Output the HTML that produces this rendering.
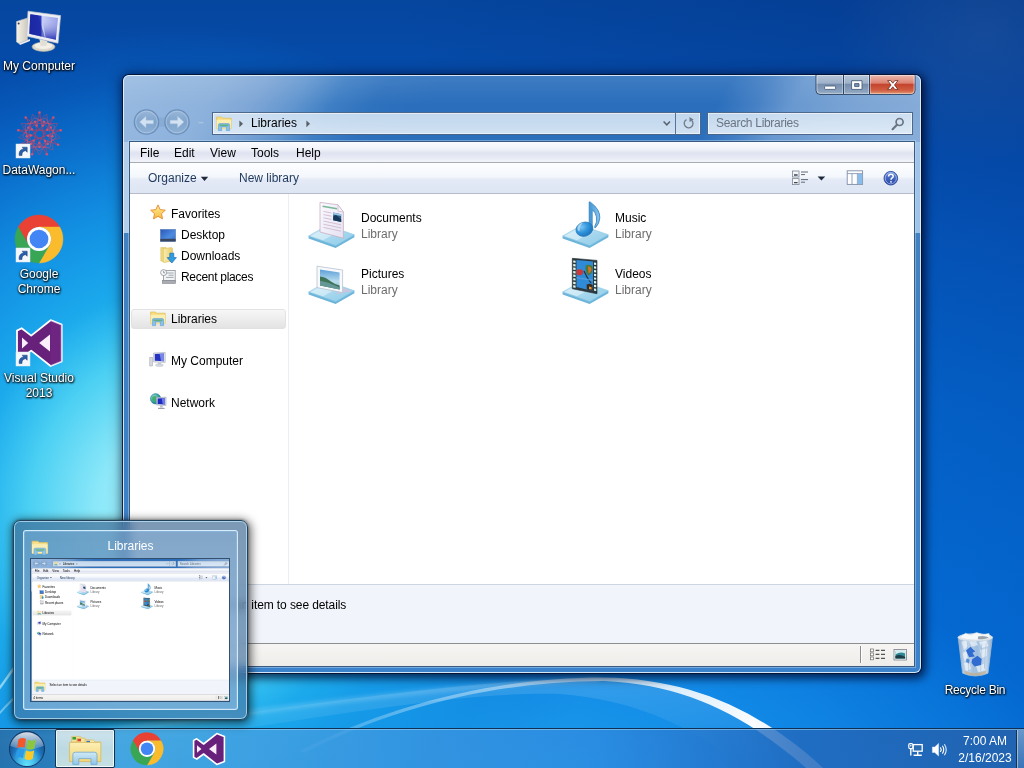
<!DOCTYPE html>
<html lang="en"><head><meta charset="utf-8"><title>Libraries</title>
<style>
*{box-sizing:border-box;margin:0;padding:0}
html,body{width:1024px;height:768px;overflow:hidden}
body{position:relative;font-family:"Liberation Sans",sans-serif;font-size:12px;color:#000;
 background:#0b5fc4;}
#wall{position:absolute;left:0;top:0;width:1024px;height:768px;overflow:hidden;
 background:
  radial-gradient(ellipse 440px 490px at 175px 515px, rgb(168,241,252) 0%, rgb(140,232,249) 18%, rgb(76,208,243) 33%, rgb(48,188,240) 40%, rgb(28,170,236) 46%, rgb(22,156,232) 55%, rgba(20,150,230,.82) 65%, rgba(16,138,224,.52) 78%, rgba(14,128,220,.2) 90%, rgba(14,128,220,0) 100%),
  radial-gradient(ellipse 620px 300px at 470px 820px, rgba(34,168,238,1) 0%, rgba(24,148,233,.78) 50%, rgba(12,115,216,0) 100%),
  linear-gradient(68deg, rgba(4,30,100,0) 0%, rgba(4,30,100,0) 52%, rgba(2,20,90,.2) 100%),
  radial-gradient(ellipse 150px 130px at 985px 35px, rgba(70,118,175,.30) 0%, rgba(70,118,175,.16) 50%, rgba(70,118,175,0) 100%),
  linear-gradient(180deg,#05469f 0%,#054dad 12%,#055cc4 32%,#0468d2 52%,#0470dc 75%,#0474e2 100%);}
.abs{position:absolute}
.dlabel{position:absolute;color:#fff;text-align:center;white-space:nowrap;font-size:12px;line-height:15px;
 text-shadow:0 1px 2px rgba(0,0,0,.95),1px 1px 2px rgba(0,0,0,.8),0 0 3px rgba(0,0,0,.6)}
svg{display:block;position:absolute;overflow:visible}
.client,.addr,.search,.tray,.dlabel,#ptitle,#thumb{will-change:transform}
#thumb .client,#thumb .addr,#thumb .search{will-change:auto}
/* window */
.win{position:absolute;width:798px;height:598px;border-radius:6px;
 box-shadow:0 0 0 1px rgba(4,16,48,.85), 2px 3px 8px 2px rgba(0,8,40,.68), 0 0 14px 3px rgba(0,10,40,.28);
 overflow:hidden;
 background:#3f7fc2}
.glass{position:absolute;left:0;top:0;width:798px;height:67px;
 background:
  linear-gradient(180deg, rgba(255,255,255,.10) 0px, rgba(255,255,255,0) 30px),
  linear-gradient(120deg, rgb(152,186,225) 0%, rgb(141,178,220) 12%, rgb(126,166,214) 17.5%, rgb(98,150,207) 22.5%, rgb(62,126,196) 27%, rgb(46,113,189) 32%, rgb(42,110,188) 38%, rgb(42,110,188) 73%, rgb(68,127,196) 77.5%, rgb(104,152,208) 82%, rgb(124,165,213) 90%, rgb(136,173,217) 100%);}
.glasslow{position:absolute;left:0;top:67px;width:798px;height:531px;
 background:
  linear-gradient(90deg, rgb(178,206,234) 0px, rgb(178,206,234) 7px, rgba(0,0,0,0) 7px, rgba(0,0,0,0) 791px, rgb(160,196,232) 791px, rgb(160,196,232) 798px) 0 0/798px 91px no-repeat,
  linear-gradient(180deg,#4683c0 0%,#3d80c4 50%,#3a82cc 100%)}
.winedge{position:absolute;left:0;top:0;width:798px;height:598px;border-radius:6px;
 box-shadow:inset 0 0 0 1px rgba(232,244,253,.88)}
.client{position:absolute;left:6px;top:66px;width:786px;height:526px;border:1px solid #3b5a82;background:#fff;box-shadow:0 0 0 1px rgba(190,225,248,.45)}
.menubar{position:absolute;left:0;top:0;width:784px;height:21px;border-bottom:1px solid #a7abb3;
 background:linear-gradient(180deg,#fbfcfe 0%,#f1f3fa 35%,#dfe2f0 55%,#e6e9f4 75%,#f3f4fa 100%)}
.menubar span{position:absolute;top:4px;font-size:12px;line-height:15px;color:#000}
.cmdbar{position:absolute;left:0;top:21px;width:784px;height:31px;border-bottom:1px solid #b6bccc;
 background:linear-gradient(180deg,#fdfeff 0%,#f4f7fc 45%,#e4eaf6 55%,#dde5f3 100%)}
.cmdbar span{position:absolute;top:8px;font-size:12px;line-height:15px;color:#1e395b}
.nav{position:absolute;left:0;top:52px;width:159px;height:390px;background:#fff;border-right:1px solid #ebeef2}
.nav span{position:absolute;font-size:12px;line-height:15px;color:#000;white-space:nowrap}
.sel{position:absolute;left:1px;top:115px;width:155px;height:20px;border:1px solid #e2e2e2;border-radius:3px;
 background:linear-gradient(180deg,#f7f7f7 0%,#ededed 50%,#e3e3e3 100%)}
.content{position:absolute;left:159px;top:52px;width:625px;height:390px;background:#fff}
.content .t{position:absolute;font-size:12px;line-height:15px;color:#000;white-space:nowrap}
.content .g{position:absolute;font-size:12px;line-height:15px;color:#6d6d6d;white-space:nowrap}
.details{position:absolute;left:0;top:442px;width:784px;height:59px;background:#f1f5fb;border-top:1px solid #ccd5e2}
.details span{position:absolute;left:69px;top:13px;letter-spacing:-.1px;font-size:12px;line-height:15px;white-space:nowrap;color:#000}
.status{position:absolute;left:0;top:501px;width:784px;height:23px;background:linear-gradient(180deg,#f6f5f3,#efedea);border-top:1px solid #8e8f8f}
.status span{position:absolute;left:4px;top:4px;font-size:12px;line-height:15px;color:#000}
.addr{position:absolute;left:89px;top:37px;width:489px;height:23px;border:1px solid rgba(44,72,112,.8);
 background:linear-gradient(180deg,rgba(214,229,244,.88),rgba(226,237,247,.9));box-shadow:inset 0 0 0 1px rgba(255,255,255,.55)}
.addr span{position:absolute;left:38px;top:3px;font-size:12px;line-height:15px;color:#000}
.search{position:absolute;left:584px;top:37px;width:206px;height:23px;border:1px solid rgba(44,72,112,.8);
 background:linear-gradient(180deg,rgba(214,229,244,.88),rgba(228,238,248,.92));box-shadow:inset 0 0 0 1px rgba(255,255,255,.55)}
.search span{position:absolute;left:8px;top:3px;font-size:12px;line-height:15px;color:#6b7480;letter-spacing:-.3px}
/* taskbar */
#taskbar{position:absolute;left:0;top:728px;width:1024px;height:40px;border-top:1px solid #0f2f55;
 background:linear-gradient(90deg, rgba(40,112,170,.92) 0px, rgba(44,122,182,.9) 50px, rgba(76,166,222,.84) 120px, rgba(70,160,224,.78) 260px, rgba(48,136,222,.7) 600px, rgba(34,104,188,.82) 800px, rgba(36,98,172,.9) 1024px);
 box-shadow:inset 0 1px 0 rgba(160,215,245,.55)}
.tray{position:absolute;color:#fff;font-size:12px;line-height:15px;white-space:nowrap;text-align:center}
/* popup */
#pop{position:absolute;left:13px;top:520px;width:235px;height:200px;border-radius:7px;border:1px solid #23425f;-webkit-backdrop-filter:blur(5px);backdrop-filter:blur(5px);
 background:linear-gradient(180deg,rgba(62,104,146,.68),rgba(70,118,164,.66));
 box-shadow:inset 0 0 0 1px rgba(190,228,246,.75), 1px 2px 10px 2px rgba(0,0,0,.6), 0 0 3px rgba(0,0,0,.5)}
#hov{position:absolute;left:9px;top:9px;width:215px;height:180px;border-radius:3px;border:1px solid rgba(215,238,252,.95);
 background:linear-gradient(180deg,rgba(140,185,228,.42),rgba(165,205,240,.48));box-shadow:inset 0 0 0 1px rgba(150,195,230,.45)}
#ptitle{position:absolute;left:0px;top:18px;width:233px;text-align:center;color:#fff;font-size:12px;line-height:15px}
#thumb{position:absolute;left:16px;top:37px;width:200px;height:144px;overflow:hidden;border:1px solid #34506e;background:#fff}
#thumb .win{left:0;top:0;transform-origin:0 0;transform:translate(-.6px,-7.4px) scale(.252);box-shadow:none;filter:blur(1px)}
</style></head>
<body>
<div id="wall"><svg style="left:0;top:0" width="1024" height="768" viewBox="0 0 1024 768"><defs>
<linearGradient id="swa" gradientUnits="userSpaceOnUse" x1="300" y1="0" x2="840" y2="0"><stop offset="0" stop-color="#fff" stop-opacity=".12"/><stop offset=".2" stop-color="#fff" stop-opacity=".32"/><stop offset=".5" stop-color="#fff" stop-opacity=".5"/><stop offset=".68" stop-color="#fff" stop-opacity=".82"/><stop offset=".84" stop-color="#fff" stop-opacity=".98"/><stop offset="1" stop-color="#fff" stop-opacity=".75"/></linearGradient>
<linearGradient id="swb" gradientUnits="userSpaceOnUse" x1="0" y1="680" x2="0" y2="760"><stop offset="0" stop-color="#fff" stop-opacity=".14"/><stop offset="1" stop-color="#fff" stop-opacity="0"/></linearGradient>
<filter id="swf" x="-5%" y="-5%" width="110%" height="110%"><feGaussianBlur stdDeviation=".7"/></filter>
<filter id="swg" x="-5%" y="-20%" width="110%" height="140%"><feGaussianBlur stdDeviation="2.2"/></filter></defs>
<path d="M-20 742 C150 736 420 677 604 678.5 C690 680 758 712 826 780 L760 780 C700 730 640 700 560 694 C420 690 200 745 -20 760 Z" fill="url(#swb)"/>
<path d="M-20 742 C120 735 350 690 600 678.5" stroke="#fff" stroke-opacity=".22" stroke-width="4" fill="none" filter="url(#swg)"/>
<path d="M300 751 C390 704 500 677.2 604 677.4 C694 679 766 711 838 782 L822 782 C752 718 690 684.5 604 681 C500 680.6 392 707 304 753 Z" fill="url(#swa)" filter="url(#swf)"/>
<path d="M-10 700 C2 686 8 676 14 668" stroke="#e9ffff" stroke-opacity=".55" stroke-width="2.5" fill="none" filter="url(#swf)"/>
<path d="M-10 724 C0 712 8 704 14 698" stroke="#e9ffff" stroke-opacity=".4" stroke-width="2" fill="none" filter="url(#swf)"/>
</svg></div>
<svg style="left:15px;top:8px" width="48" height="48" viewBox="15 8 48 48"><defs>
<linearGradient id="dc1" x1="0" y1="0" x2="1" y2="0"><stop offset="0" stop-color="#1d2aa8"/><stop offset=".42" stop-color="#2a3ac0"/><stop offset=".43" stop-color="#c9d0f6"/><stop offset="1" stop-color="#8d98ea"/></linearGradient>
<linearGradient id="dc2" x1="0" y1="0" x2="0" y2="1"><stop offset="0" stop-color="#fff" stop-opacity="0"/><stop offset="1" stop-color="#1c27b0" stop-opacity=".9"/></linearGradient>
<linearGradient id="dc3" x1="0" y1="0" x2="1" y2="0"><stop offset="0" stop-color="#f6f3ea"/><stop offset="1" stop-color="#cfcabc"/></linearGradient></defs>
<path d="M16.5 21.5 L27.5 18 L27.5 40 L19 43.5 L16.5 42 Z" fill="url(#dc3)" stroke="#b9bcc8" stroke-width=".6"/>
<circle cx="18.6" cy="23.6" r="1" fill="#3a3f55"/>
<path d="M19 43.5 L30 39 L30 41 L20 45 Z" fill="#e9ebf0"/>
<ellipse cx="43.5" cy="46.8" rx="11.5" ry="4.6" fill="#dcd8cc" stroke="#b8b4a6" stroke-width=".6"/>
<ellipse cx="43.5" cy="45.8" rx="9" ry="3.2" fill="#f3f0e8"/>
<path d="M39.5 39 L47.5 41 L46.5 46 L40.5 46 Z" fill="#e2dfd4"/>
<path d="M28 11.2 L60.6 15.6 L58 43.2 L26.8 36.2 Z" fill="#eceef3" stroke="#c3c6d2" stroke-width=".7"/>
<path d="M30.3 14.2 L58 17.9 L55.8 39.8 L29.3 33.8 Z" fill="url(#dc1)"/>
<path d="M42 15.8 L58 17.9 L55.8 39.8 L45.5 37.5 Z" fill="url(#dc2)"/>
<path d="M30.3 14.2 L38 15.2 L45 37.4 L29.3 33.8 Z" fill="#1a249c" opacity=".55"/>
</svg><div class="dlabel" style="left:0;top:59px;width:78px">My Computer</div>
<svg style="left:15px;top:110px" width="48" height="48" viewBox="15 110 48 48">
<path d="M39.5 112.0 L47.0 154.7 M53.7 117.2 L32.0 154.7 M61.2 130.2 L20.4 145.0 M58.5 145.0 L17.8 130.2 M47.0 154.7 L25.4 117.1 M32.0 154.7 L39.5 112.0 M20.4 145.0 L53.7 117.2 M17.8 130.2 L61.2 130.2 M25.4 117.1 L58.5 145.0" fill="none" stroke="#d8364e" stroke-width="1" opacity=".6"/>
<path d="M46.7 114.3 L53.0 150.1 M57.7 123.5 L39.5 155.0 M60.2 137.7 L26.0 150.1 M53.0 150.1 L18.8 137.6 M39.5 155.0 L21.3 123.5 M26.0 150.1 L32.4 114.3 M18.8 137.6 L46.7 114.3 M21.3 123.5 L57.7 123.5 M32.4 114.3 L60.2 137.7" fill="none" stroke="#e0405e" stroke-width=".9" opacity=".5"/>
<path d="M45.7 118.2 L56.2 137.3 M54.4 125.8 L50.1 147.3 M56.2 137.3 L39.1 151.0 M50.1 147.3 L28.3 146.8 M39.1 151.0 L22.7 136.6 M28.3 146.8 L25.0 125.2 M22.7 136.6 L34.0 117.9 M25.0 125.2 L45.7 118.2 M34.0 117.9 L54.4 125.8" fill="none" stroke="#e85a70" stroke-width=".9" opacity=".45"/>
<circle cx="39.5" cy="112.5" r="1.3" fill="#f0506a" opacity=".8"/><circle cx="53.3" cy="117.5" r="1.3" fill="#f0506a" opacity=".8"/><circle cx="60.7" cy="130.3" r="1.3" fill="#f0506a" opacity=".8"/><circle cx="58.1" cy="144.8" r="1.3" fill="#f0506a" opacity=".8"/><circle cx="46.8" cy="154.2" r="1.3" fill="#f0506a" opacity=".8"/><circle cx="32.1" cy="154.2" r="1.3" fill="#f0506a" opacity=".8"/><circle cx="20.9" cy="144.7" r="1.3" fill="#f0506a" opacity=".8"/><circle cx="18.3" cy="130.2" r="1.3" fill="#f0506a" opacity=".8"/><circle cx="25.7" cy="117.5" r="1.3" fill="#f0506a" opacity=".8"/><circle cx="44.0" cy="121.8" r="1.3" fill="#f0506a" opacity=".8"/><circle cx="50.8" cy="127.5" r="1.3" fill="#f0506a" opacity=".8"/><circle cx="52.3" cy="136.3" r="1.3" fill="#f0506a" opacity=".8"/><circle cx="47.8" cy="144.0" r="1.3" fill="#f0506a" opacity=".8"/><circle cx="39.5" cy="147.0" r="1.3" fill="#f0506a" opacity=".8"/><circle cx="31.1" cy="143.9" r="1.3" fill="#f0506a" opacity=".8"/><circle cx="26.7" cy="136.2" r="1.3" fill="#f0506a" opacity=".8"/><circle cx="28.3" cy="127.5" r="1.3" fill="#f0506a" opacity=".8"/><circle cx="35.1" cy="121.8" r="1.3" fill="#f0506a" opacity=".8"/><circle cx="42.8" cy="125.6" r="1.3" fill="#f0506a" opacity=".8"/><circle cx="47.4" cy="129.7" r="1.3" fill="#f0506a" opacity=".8"/><circle cx="48.3" cy="135.8" r="1.3" fill="#f0506a" opacity=".8"/><circle cx="45.1" cy="141.0" r="1.3" fill="#f0506a" opacity=".8"/><circle cx="39.3" cy="143.0" r="1.3" fill="#f0506a" opacity=".8"/><circle cx="33.6" cy="140.8" r="1.3" fill="#f0506a" opacity=".8"/><circle cx="30.6" cy="135.4" r="1.3" fill="#f0506a" opacity=".8"/><circle cx="31.8" cy="129.3" r="1.3" fill="#f0506a" opacity=".8"/><circle cx="36.6" cy="125.5" r="1.3" fill="#f0506a" opacity=".8"/>
<g transform="translate(16 144)"><g><rect x="0" y="0" width="14" height="14" fill="#f4f8fc" stroke="#dfe7ef" stroke-width=".5"/><path d="M3.2 11.6 C2.6 7.6 4.6 5.3 7.6 5.1 L6.2 3.2 L11.2 3.2 L11.2 8.2 L9.5 6.7 C7.2 6.9 5.6 8.6 6.0 11.6 Z" fill="#2b5fa8" stroke="#1d3f7a" stroke-width=".5"/></g>
</g></svg><div class="dlabel" style="left:0;top:163px;width:78px">DataWagon...</div>
<svg style="left:15px;top:214px" width="48" height="50" viewBox="15 214 48 50"><path d="M18.22 227.00 A24 24 0 0 1 59.78 227.00 L39.00 227.00 A12.00 12.00 0 0 0 28.61 245.00 Z" fill="#e94235" stroke="#e94235" stroke-width=".4"/><path d="M59.78 227.00 A24 24 0 0 1 39.00 263.00 L49.39 245.00 A12.00 12.00 0 0 0 39.00 227.00 Z" fill="#fabb2d" stroke="#fabb2d" stroke-width=".4"/><path d="M39.00 263.00 A24 24 0 0 1 18.22 227.00 L28.61 245.00 A12.00 12.00 0 0 0 49.39 245.00 Z" fill="#38a654" stroke="#38a654" stroke-width=".4"/><circle cx="39" cy="239" r="12.00" fill="#fff"/><circle cx="39" cy="239" r="9.36" fill="#4285f4"/><g transform="translate(16 248)"><g><rect x="0" y="0" width="14" height="14" fill="#f4f8fc" stroke="#dfe7ef" stroke-width=".5"/><path d="M3.2 11.6 C2.6 7.6 4.6 5.3 7.6 5.1 L6.2 3.2 L11.2 3.2 L11.2 8.2 L9.5 6.7 C7.2 6.9 5.6 8.6 6.0 11.6 Z" fill="#2b5fa8" stroke="#1d3f7a" stroke-width=".5"/></g>
</g></svg><div class="dlabel" style="left:0;top:267px;width:78px">Google<br>Chrome</div>
<svg style="left:15px;top:318px" width="48" height="50" viewBox="15 318 48 50">
<path d="M50.6 320.2 L61.7 324.7 L61.7 361.5 L50.6 366 L31.2 350.6 L21.6 358 L17 355.8 L17 330.6 L21.6 328.2 L31.2 335.6 Z" fill="#68217a" stroke="#fff" stroke-width="1.8" stroke-linejoin="round"/>
<path d="M50 334.6 L50 351.4 L39.2 343 Z" fill="#fbeefc"/>
<path d="M22 337.6 L22 348.6 L28.2 343 Z" fill="#fbeefc"/>
<path d="M50.6 320.2 L61.7 324.7 L61.7 361.5 L50.6 366 Z" fill="#7b2c8f" opacity=".35"/>
<g transform="translate(16 352)"><g><rect x="0" y="0" width="14" height="14" fill="#f4f8fc" stroke="#dfe7ef" stroke-width=".5"/><path d="M3.2 11.6 C2.6 7.6 4.6 5.3 7.6 5.1 L6.2 3.2 L11.2 3.2 L11.2 8.2 L9.5 6.7 C7.2 6.9 5.6 8.6 6.0 11.6 Z" fill="#2b5fa8" stroke="#1d3f7a" stroke-width=".5"/></g></g></svg><div class="dlabel" style="left:0;top:371px;width:78px">Visual Studio<br>2013</div>
<svg style="left:951px;top:630px" width="48" height="50" viewBox="951 630 48 50"><defs>
<linearGradient id="rb1" x1="0" y1="0" x2="1" y2="0"><stop offset="0" stop-color="#9fb6cf" stop-opacity=".9"/><stop offset=".22" stop-color="#dfe8f1" stop-opacity=".86"/><stop offset=".55" stop-color="#c3d2e2" stop-opacity=".8"/><stop offset=".8" stop-color="#e6edf4" stop-opacity=".85"/><stop offset="1" stop-color="#9fb4cc" stop-opacity=".9"/></linearGradient></defs>
<path d="M958.2 637.2 L992.4 637.2 L988 673.2 Q975.3 678.8 962.6 673.2 Z" fill="url(#rb1)" stroke="#a9bbd0" stroke-width=".8"/>
<path d="M961.5 642 L966 640 L968 646 L964 650 Z M969 641.5 L976 640.5 L978 645 L972 647 Z M979 642 L986 640.6 L988.6 646 L982 648 Z M962.6 653 L966.4 651 L968 658 L964.4 661 Z M980 650 L987 648.6 L986.6 656 L981.6 658 Z M964 663 L969 662 L971 669 L966 671 Z M976 666 L984 664 L985 670 L978 672.6 Z M969.6 648.6 L973 647.6 L973.6 651 L970.6 652 Z" fill="#fff" opacity=".55"/>
<path d="M967.4 643 L968.8 671 M972.6 646 L973.2 672 M981.6 644 L980.6 671 M986 643 L984.4 669" stroke="#8aa0ba" stroke-width=".6" opacity=".55" fill="none"/>
<ellipse cx="975.3" cy="637.4" rx="17.2" ry="3.6" fill="#e9eef3" stroke="#cfd9e4" stroke-width="1"/>
<path d="M961 636 L965.6 633.2 L970.6 635 L976.6 632.4 L982.6 634.6 L989 633.4 L990.5 638 Q975.3 642 960.5 638 Z" fill="#f6f8fa" stroke="#cfd6df" stroke-width=".5"/>
<path d="M978 636.6 Q984 634.8 989 637.6 Q984 640 978 639 Z" fill="#6b737e" opacity=".65"/>
<path d="M966 650.4 L970.6 646.8 L975.2 651.6 L972.4 652.8 L974.8 656.4 L969.2 657.2 Z" fill="#2f6bd0"/>
<path d="M972 659.4 L977.4 655.8 L981.6 659 L981 665 L974.6 666.6 L971.6 663 Z" fill="#2f6bd0"/>
<path d="M966.4 658.6 L969.6 659.6 L969 663.4 L966 662 Z" fill="#3f7ad8" opacity=".8"/>
<path d="M964.2 670.6 Q975 675.6 986.4 670.6 L985.8 673.4 Q975.3 677.8 964.8 673.4 Z" fill="#c2ae8c" opacity=".75"/>
</svg><div class="dlabel" style="left:936px;top:683px;width:78px;letter-spacing:-.25px">Recycle Bin</div>
<div class="win" style="left:123px;top:75px">
 <div class="glass"></div>
 <div class="glasslow"></div>
 <div class="winedge"></div>
 <svg style="left:692px;top:-1px" width="101" height="22" viewBox="0 0 101 22"><defs>
<linearGradient id="cpb" x1="0" y1="0" x2="0" y2="1"><stop offset="0" stop-color="#b9c7da"/><stop offset=".45" stop-color="#9fb2ca"/><stop offset=".5" stop-color="#768eac"/><stop offset="1" stop-color="#93abc6"/></linearGradient>
<linearGradient id="cpr" x1="0" y1="0" x2="0" y2="1"><stop offset="0" stop-color="#ecbcb2"/><stop offset=".45" stop-color="#dc8170"/><stop offset=".5" stop-color="#c4432e"/><stop offset=".8" stop-color="#cf5c40"/><stop offset="1" stop-color="#e08e68"/></linearGradient></defs>
<path d="M1 0 L100 0 L100 16.4 Q100 20.4 96 20.4 L5 20.4 Q1 20.4 1 16.4 Z" fill="url(#cpb)" stroke="#2f4766" stroke-width="1"/>
<path d="M55 .5 L99.5 .5 L99.5 16.4 Q99.5 19.9 96 19.9 L55 19.9 Z" fill="url(#cpr)"/>
<path d="M2 1.5 L99 1.5 L99 16.2 Q99 19.4 96 19.4 L5 19.4 Q2 19.4 2 16.2 Z" fill="none" stroke="#fff" stroke-opacity=".45" stroke-width="1"/>
<path d="M28.5 .5 L28.5 20 M54.5 .5 L54.5 20" stroke="#2f4766" stroke-width="1"/>
<path d="M29.5 1 L29.5 19.5 M55.5 1 L55.5 19.5 M27.5 1 L27.5 19.5 M53.5 1 L53.5 19.5" stroke="#fff" stroke-opacity=".35" stroke-width="1"/>
<rect x="9.6" y="12" width="11" height="3.4" rx=".6" fill="#fff" stroke="#47607e" stroke-width=".9"/>
<path d="M36.6 6.7 L47 6.7 L47 15.4 L36.6 15.4 Z M39.6 9.6 L44 9.6 L44 12.6 L39.6 12.6 Z" fill="#fff" fill-rule="evenodd" stroke="#47607e" stroke-width=".9"/>
<path d="M72.6 6.6 L75.8 6.6 L77.8 9.2 L79.8 6.6 L83 6.6 L79.5 11 L83 15.4 L79.8 15.4 L77.8 12.8 L75.8 15.4 L72.6 15.4 L76.1 11 Z" fill="#fff" stroke="#6a2a20" stroke-width=".8" stroke-linejoin="round"/>
</svg>
 <svg style="left:8px;top:32px" width="64" height="30" viewBox="8 32 64 30"><defs>
<linearGradient id="nvb" x1="0" y1="0" x2="0" y2="1"><stop offset="0" stop-color="#9ab7d8" stop-opacity=".9"/><stop offset=".5" stop-color="#7fa3cb" stop-opacity=".9"/><stop offset="1" stop-color="#8fb0d4" stop-opacity=".9"/></linearGradient></defs>
<path d="M30 40 Q38.75 45 47.5 40 L47.5 54 Q38.75 49 30 54 Z" fill="#86a9d0" opacity=".75"/>
<circle cx="23.5" cy="47" r="12.2" fill="url(#nvb)" stroke="#6a8fbc" stroke-width="1.2"/>
<circle cx="54" cy="47" r="12.2" fill="url(#nvb)" stroke="#6a8fbc" stroke-width="1.2"/>
<circle cx="23.5" cy="47" r="10.8" fill="none" stroke="#c3d7ec" stroke-opacity=".6" stroke-width=".8"/>
<circle cx="54" cy="47" r="10.8" fill="none" stroke="#c3d7ec" stroke-opacity=".6" stroke-width=".8"/>
<path d="M16.6 47 L23 41.2 L23 45.2 L30.4 45.2 L30.4 48.8 L23 48.8 L23 52.8 Z" fill="#d3e2f2" stroke="#a9c2de" stroke-width=".5"/>
<path d="M60.9 47 L54.5 41.2 L54.5 45.2 L47.1 45.2 L47.1 48.8 L54.5 48.8 L54.5 52.8 Z" fill="#d3e2f2" stroke="#a9c2de" stroke-width=".5"/>
<path d="M75.5 47.6 L80.5 47.6" stroke="#b4cbe4" stroke-width="1.4" opacity=".7"/>
</svg>
 <div class="addr"><svg style="left:3px;top:3px" width="16" height="16" viewBox="0 0 16 16"><g><path d="M.6 1 L5.6 1 L6.6 2.2 L15.2 2.2 L15.2 12.6 L.6 12.6 Z" fill="#f6dc7e" stroke="#dfbe58" stroke-width=".7"/>
<path d="M.6 3.8 L15.2 3.8 L15.2 12.6 L.6 12.6 Z" fill="#fbeeb2"/>
<path d="M2.4 14.6 L2.4 9 Q2.4 7.6 3.8 7.6 L12.2 7.6 Q13.6 7.6 13.6 9 L13.6 14.6 L10.4 14.6 L10.4 11 L5.6 11 L5.6 14.6 Z" fill="#86c2ec" stroke="#5a9bd0" stroke-width=".6"/>
<path d="M3.6 8.6 L12.4 8.6 L12.4 10.2 L3.6 10.2 Z" fill="#5aa85e" opacity=".75"/></g></svg><svg style="left:0px;top:0px" width="487" height="21" viewBox="0 0 487 21">
<path d="M26.4 7.4 L30 10.8 L26.4 14.2 Z" fill="#5a5f66"/>
<path d="M93.4 7.4 L97 10.8 L93.4 14.2 Z" fill="#5a5f66"/>
<path d="M450.6 8.4 L453.8 11.8 L457 8.4" stroke="#5a6470" stroke-width="1.5" fill="none"/>
<path d="M462.5 0 L462.5 21" stroke="#3a5a84" stroke-opacity=".8" stroke-width="1"/>
<path d="M478.6 7.2 A4.4 4.4 0 1 1 473.4 6.6" stroke="#707a88" stroke-width="1.3" fill="none"/>
<path d="M476.4 4 L480.6 6.4 L476.6 9 Z" fill="#707a88"/>
</svg><span>Libraries</span></div>
 <div class="search"><span>Search Libraries</span><svg style="left:183px;top:4px" width="14" height="14" viewBox="0 0 14 14"><circle cx="8.6" cy="5" r="3.5" fill="none" stroke="#6a7482" stroke-width="1.7"/><path d="M6 7.8 L1.6 12.2" stroke="#6a7482" stroke-width="2.2" stroke-linecap="round"/></svg></div>
 <div class="client">
  <div class="menubar"><span style="left:10px">File</span><span style="left:44px">Edit</span><span style="left:80px">View</span><span style="left:121px">Tools</span><span style="left:166px">Help</span></div>
  <div class="cmdbar"><span style="left:18px">Organize</span><svg style="left:70px;top:13px" width="9" height="6" viewBox="0 0 9 6"><path d="M.8 .8 L8.2 .8 L4.5 5 Z" fill="#1e2a3a"/></svg><span style="left:109px">New library</span><svg style="left:660px;top:5px" width="112" height="20" viewBox="790 168 112 20"><defs><linearGradient id="hlp" x1="0" y1="0" x2="0" y2="1"><stop offset="0" stop-color="#6a8fd8"/><stop offset="1" stop-color="#1e3ea4"/></linearGradient></defs>
<rect x="792.6" y="171" width="6.4" height="6" fill="#f4f6f8" stroke="#7d8894" stroke-width=".8"/><rect x="792.6" y="178.6" width="6.4" height="6" fill="#f4f6f8" stroke="#7d8894" stroke-width=".8"/>
<path d="M794 175 L797.6 175 M794 182.6 L797.6 182.6" stroke="#3a4654" stroke-width="1.4"/>
<path d="M801 172 L808 172 M801 174.6 L805 174.6 M801 179.6 L808 179.6 M801 182.2 L805 182.2" stroke="#5e6a78" stroke-width="1"/>
<path d="M817.6 176.4 L825.2 176.4 L821.4 180.4 Z" fill="#1e2a3a"/>
<rect x="847.2" y="170.8" width="15.4" height="13.6" fill="#fdfeff" stroke="#7d8ea6" stroke-width=".9"/>
<path d="M847.2 173.6 L862.6 173.6 M852 173.6 L852 184.4 M857.4 173.6 L857.4 184.4" stroke="#7d8ea6" stroke-width=".8"/>
<rect x="857.8" y="174" width="4.4" height="10" fill="#86bdec"/>
<circle cx="890.8" cy="178.2" r="6.8" fill="url(#hlp)" stroke="#2a4aa0" stroke-width=".9"/>
<circle cx="890.8" cy="178.2" r="5.6" fill="none" stroke="#d9e6fa" stroke-opacity=".8" stroke-width=".7"/>
<path d="M888.6 176.4 Q888.6 174.2 890.9 174.2 Q893.2 174.2 893.2 176.2 Q893.2 177.4 891.8 178.2 Q891 178.8 891 179.8" stroke="#fff" stroke-width="1.5" fill="none"/><circle cx="891" cy="181.8" r=".9" fill="#fff"/>
</svg></div>
  <div class="nav">
   <div class="sel"></div>
   <svg style="left:20px;top:10px" width="16" height="16" viewBox="0 0 16 16"><defs><linearGradient id="stg" x1="0" y1="0" x2="0" y2="1"><stop offset="0" stop-color="#fff0a0"/><stop offset="1" stop-color="#f6b93a"/></linearGradient></defs>
<path d="M8 .9 L10.1 5.6 L15.3 6.2 L11.5 9.7 L12.5 14.9 L8 12.3 L3.5 14.9 L4.5 9.7 L.7 6.2 L5.9 5.6 Z" fill="url(#stg)" stroke="#e7923c" stroke-width="1" stroke-linejoin="round"/></svg><span style="left:41px;top:13px">Favorites</span>
   <svg style="left:30px;top:35px" width="16" height="13" viewBox="0 0 16 13"><defs><linearGradient id="dkg" x1="0" y1="0" x2="1" y2="1"><stop offset="0" stop-color="#2a56b8"/><stop offset=".6" stop-color="#4c8ce0"/><stop offset="1" stop-color="#3a6cc8"/></linearGradient></defs>
<rect x=".4" y=".4" width="15.2" height="12" fill="url(#dkg)" stroke="#5a7fb6" stroke-width=".6"/><rect x=".4" y="9.8" width="15.2" height="2.6" fill="#3a4660"/></svg><span style="left:51px;top:34px">Desktop</span>
   <svg style="left:30px;top:53px" width="17" height="17" viewBox="0 0 17 17"><defs><linearGradient id="dlg" x1="0" y1="0" x2="1" y2="0"><stop offset="0" stop-color="#f9eeb0"/><stop offset="1" stop-color="#e8cb66"/></linearGradient></defs>
<path d="M.8 .6 L6 .6 L6 15.2 L.8 14 Z" fill="#efd97e" stroke="#d6b85a" stroke-width=".5"/>
<path d="M3.4 1.6 L11.6 .6 L12.6 1.6 L12.6 14.2 L3.4 15.4 Z" fill="url(#dlg)" stroke="#d6b85a" stroke-width=".5"/>
<path d="M9.8 6.2 L13.8 6.2 L13.8 10.6 L16.4 10.6 L11.8 16 L7.2 10.6 L9.8 10.6 Z" fill="#2f9be0" stroke="#1c6fb8" stroke-width=".7" stroke-linejoin="round"/></svg><span style="left:51px;top:55px">Downloads</span>
   <svg style="left:30px;top:75px" width="16" height="15" viewBox="0 0 16 15">
<rect x="3.6" y="1.4" width="11.6" height="10" fill="#f2f3f5" stroke="#8c9096" stroke-width=".8"/>
<path d="M6 4 L13.6 4 M8.6 6.2 L13.6 6.2 M6 8.4 L13.6 8.4" stroke="#9aa0a8" stroke-width=".9"/>
<rect x="2.4" y="11.4" width="13.2" height="3" fill="#a9adb3" stroke="#80858c" stroke-width=".6"/>
<circle cx="3.6" cy="3.6" r="3" fill="#f7f8fa" stroke="#8c9096" stroke-width=".8"/><path d="M3.6 1.8 L3.6 3.8 L5 3.8" stroke="#70757c" stroke-width=".7" fill="none"/></svg><span style="left:51px;top:76px;letter-spacing:-.3px">Recent places</span>
   <svg style="left:20px;top:117px" width="16" height="16" viewBox="0 0 16 16"><g><path d="M.6 1 L5.6 1 L6.6 2.2 L15.2 2.2 L15.2 12.6 L.6 12.6 Z" fill="#f6dc7e" stroke="#dfbe58" stroke-width=".7"/>
<path d="M.6 3.8 L15.2 3.8 L15.2 12.6 L.6 12.6 Z" fill="#fbeeb2"/>
<path d="M2.4 14.6 L2.4 9 Q2.4 7.6 3.8 7.6 L12.2 7.6 Q13.6 7.6 13.6 9 L13.6 14.6 L10.4 14.6 L10.4 11 L5.6 11 L5.6 14.6 Z" fill="#86c2ec" stroke="#5a9bd0" stroke-width=".6"/>
<path d="M3.6 8.6 L12.4 8.6 L12.4 10.2 L3.6 10.2 Z" fill="#5aa85e" opacity=".75"/></g></svg><span style="left:41px;top:118px">Libraries</span>
   <svg style="left:19px;top:158px" width="17" height="16" viewBox="0 0 17 16">
<rect x=".8" y="5.4" width="2.6" height="8.6" fill="#d6d8de" stroke="#9a9ea8" stroke-width=".5"/>
<path d="M4.6 1 L16.2 .4 L16.2 10.4 L4.6 10 Z" fill="#e4e6ec" stroke="#a9adb8" stroke-width=".6"/>
<path d="M5.8 2 L15 1.6 L15 9.2 L5.8 8.8 Z" fill="#2434c0"/>
<path d="M10.6 1.8 L15 1.6 L15 9.2 L12 9 Z" fill="#8e9af0" opacity=".8"/>
<path d="M9 10.4 L12 10.4 L12.4 12.6 L8.6 12.6 Z" fill="#c9ccd4"/><ellipse cx="10.4" cy="13.2" rx="4" ry="1.2" fill="#d9dbe2" stroke="#a9adb8" stroke-width=".4"/></svg><span style="left:41px;top:160px">My Computer</span>
   <svg style="left:20px;top:199px" width="17" height="17" viewBox="0 0 17 17"><defs><radialGradient id="ngl" cx=".35" cy=".35" r=".8"><stop offset="0" stop-color="#9fe0f0"/><stop offset=".6" stop-color="#2f9a8c"/><stop offset="1" stop-color="#1a6a8c"/></radialGradient></defs>
<circle cx="5.6" cy="5.8" r="5.2" fill="url(#ngl)" stroke="#2a7a94" stroke-width=".5"/>
<path d="M2.2 4 Q4.6 2.4 6.4 3.6 Q5.2 6 6.6 7.6 Q4 8.8 2.2 7 Z" fill="#3aa85a" opacity=".85"/>
<path d="M6.6 4.6 L16 4.2 L16 12.4 L6.6 12 Z" fill="#dfe2ea" stroke="#9aa0ae" stroke-width=".6"/>
<path d="M7.6 5.4 L15 5.1 L15 11.4 L7.6 11.1 Z" fill="#1c2cc0"/>
<path d="M11.6 5.3 L15 5.1 L15 11.4 L12.8 11.3 Z" fill="#7f8cf0" opacity=".8"/>
<path d="M10.2 12.2 L12.6 12.2 L12.8 14.6 L10 14.6 Z" fill="#b9bcc6"/><path d="M8 15.4 L14.6 15.4" stroke="#9aa0ae" stroke-width="1.2"/></svg><span style="left:41px;top:202px">Network</span>
  </div>
  <div class="content">
   <svg style="left:19px;top:6px" width="48" height="48" viewBox="0 0 48 48"><defs><linearGradient id="dpd" x1="0" y1="0" x2="1" y2="1"><stop offset="0" stop-color="#d8eef8"/><stop offset=".5" stop-color="#a9d8ee"/><stop offset="1" stop-color="#8ccbe8"/></linearGradient></defs>
<path d="M0.6 36 L0.6 38.4 L27.6 48 L46.4 37.2 L46.4 34.8 Z" fill="#6cb4d9"/>
<path d="M0.6 36 L19.4 25.4 L46.4 34.8 L27.8 45.6 Z" fill="url(#dpd)" stroke="#8ac6e4" stroke-width=".6"/>
<path d="M3 36 L19.6 26.6 L32 31 L15 40.2 Z" fill="#e6f5fb" opacity=".55"/>
<defs><linearGradient id="dpg" x1="0" y1="0" x2="1" y2="1"><stop offset="0" stop-color="#fbfaff"/><stop offset="1" stop-color="#e4e1f2"/></linearGradient></defs>
<path d="M12 2.4 L30 4.8 L35.4 12 L35.4 38.2 L12 32 Z" fill="url(#dpg)" stroke="#c9aec2" stroke-width=".8" stroke-linejoin="round"/>
<path d="M30 4.8 L30 11.2 L35.4 12 Z" fill="#f4f2fa" stroke="#c9aec2" stroke-width=".6"/>
<path d="M14.6 6.2 L29 8.8" stroke="#79b896" stroke-width="1.6"/>
<path d="M15.4 11.4 L23.6 13 M15.4 14.6 L23.6 16.2 M15.4 17.8 L23.6 19.4 M15.4 21 L33 24.8 M15.4 24.2 L33 28 M15.4 27.4 L33 31.2" stroke="#d3b9cc" stroke-width=".9"/>
<path d="M25.2 12.6 L33.2 14.2 L33.2 22 L25.2 20.2 Z" fill="#2f5f8a"/>
<path d="M25.2 16.4 L28 15 L33.2 19.4 L33.2 22 L25.2 20.2 Z" fill="#17395c"/>
<path d="M25.2 12.6 L33.2 14.2 L33.2 16 L25.2 14.4 Z" fill="#9cc8e6"/></svg><span class="t" style="left:72px;top:17px">Documents</span><span class="g" style="left:72px;top:33px">Library</span>
   <svg style="left:273px;top:6px" width="48" height="48" viewBox="0 0 48 48"><defs><linearGradient id="mpd" x1="0" y1="0" x2="1" y2="1"><stop offset="0" stop-color="#d8eef8"/><stop offset=".5" stop-color="#a9d8ee"/><stop offset="1" stop-color="#8ccbe8"/></linearGradient></defs>
<path d="M0.6 36 L0.6 38.4 L27.6 48 L46.4 37.2 L46.4 34.8 Z" fill="#6cb4d9"/>
<path d="M0.6 36 L19.4 25.4 L46.4 34.8 L27.8 45.6 Z" fill="url(#mpd)" stroke="#8ac6e4" stroke-width=".6"/>
<path d="M3 36 L19.6 26.6 L32 31 L15 40.2 Z" fill="#e6f5fb" opacity=".55"/>
<defs><radialGradient id="mnh" cx=".38" cy=".3" r=".75"><stop offset="0" stop-color="#7cc4f2"/><stop offset=".5" stop-color="#2f95dc"/><stop offset="1" stop-color="#1b6fb8"/></radialGradient>
<linearGradient id="mst" x1="0" y1="0" x2="1" y2="0"><stop offset="0" stop-color="#3f96d4"/><stop offset="1" stop-color="#8cc6ee"/></linearGradient></defs>
<path d="M27.2 2 Q27.6 1.6 28.4 2.2 Q38.4 9.6 37.8 18 Q37.4 23.6 33.6 27.6 Q32.6 28.2 32.6 27 Q35.6 21.6 34.4 16.6 Q33.4 12.2 30.2 9.6 L30.2 30.6 L27.2 30.6 Z" fill="url(#mst)" stroke="#2f7ebc" stroke-width=".8" stroke-linejoin="round"/>
<ellipse cx="22.4" cy="29.2" rx="8.6" ry="7" fill="url(#mnh)" stroke="#2a78b8" stroke-width=".7" transform="rotate(-18 22.4 29.2)"/>
<path d="M15.4 28.8 Q15.6 23.6 21.6 22.6 Q17.6 25.4 17.6 31.6 Q15.6 31 15.4 28.8Z" fill="#b8def6" opacity=".8"/></svg><span class="t" style="left:326px;top:17px">Music</span><span class="g" style="left:326px;top:33px">Library</span>
   <svg style="left:19px;top:62px" width="48" height="48" viewBox="0 0 48 48"><defs><linearGradient id="ppd" x1="0" y1="0" x2="1" y2="1"><stop offset="0" stop-color="#d8eef8"/><stop offset=".5" stop-color="#a9d8ee"/><stop offset="1" stop-color="#8ccbe8"/></linearGradient></defs>
<path d="M0.6 36 L0.6 38.4 L27.6 48 L46.4 37.2 L46.4 34.8 Z" fill="#6cb4d9"/>
<path d="M0.6 36 L19.4 25.4 L46.4 34.8 L27.8 45.6 Z" fill="url(#ppd)" stroke="#8ac6e4" stroke-width=".6"/>
<path d="M3 36 L19.6 26.6 L32 31 L15 40.2 Z" fill="#e6f5fb" opacity=".55"/>
<defs><linearGradient id="psk" x1="0" y1="0" x2="0" y2="1"><stop offset="0" stop-color="#5d9fd8"/><stop offset=".6" stop-color="#b9dcee"/><stop offset="1" stop-color="#8fb8c9"/></linearGradient></defs>
<path d="M27 38.6 L40 36 L44 34.8 L36 32 Z" fill="#e9b9d6" opacity=".55"/>
<path d="M9 10.2 L34.6 14 L34.6 36.6 L9 31.6 Z" fill="#f8f9fc" stroke="#b7c1d0" stroke-width=".8" stroke-linejoin="round"/>
<path d="M12 13.4 L31.6 16.4 L31.6 33.4 L12 29.6 Z" fill="url(#psk)"/>
<path d="M12 20.4 Q18 21 23 25.6 Q27 28.6 31.6 29.6 L31.6 33.4 L12 29.6 Z" fill="#3f7358"/>
<path d="M12 24.8 Q20 26 31.6 31.6 L31.6 33.4 L12 29.6 Z" fill="#6fa0a8" opacity=".8"/></svg><span class="t" style="left:72px;top:73px">Pictures</span><span class="g" style="left:72px;top:89px">Library</span>
   <svg style="left:273px;top:62px" width="48" height="48" viewBox="0 0 48 48"><defs><linearGradient id="vpd" x1="0" y1="0" x2="1" y2="1"><stop offset="0" stop-color="#d8eef8"/><stop offset=".5" stop-color="#a9d8ee"/><stop offset="1" stop-color="#8ccbe8"/></linearGradient></defs>
<path d="M0.6 36 L0.6 38.4 L27.6 48 L46.4 37.2 L46.4 34.8 Z" fill="#6cb4d9"/>
<path d="M0.6 36 L19.4 25.4 L46.4 34.8 L27.8 45.6 Z" fill="url(#vpd)" stroke="#8ac6e4" stroke-width=".6"/>
<path d="M3 36 L19.6 26.6 L32 31 L15 40.2 Z" fill="#e6f5fb" opacity=".55"/>
<path d="M10.3 2.3 L35 4.4 L35 37.75 L10.3 32.75 Z" fill="#2c3a40" stroke="#1e2a30" stroke-width=".6" stroke-linejoin="round"/>
<path d="M14.5 4 L31 5.5 L31 35 L14.5 31 Z" fill="#2f8ad8"/>
<path d="M14.5 14 Q18 12 21 14.6 Q22 18.6 18 19.4 L14.5 18.4 Z" fill="#c93a3a"/>
<path d="M23.6 9.4 Q28 7.4 30.6 10.6 Q31 17 27 19.6 Q23 17.6 23.6 9.4 Z" fill="#4a7a3a"/>
<path d="M26 10.6 Q29 10 29.4 13.6 Q28.6 17.4 26.6 17.4 Z" fill="#d8702a"/>
<path d="M22 15 Q25 22 29 27" stroke="#26323a" stroke-width="1.2" fill="none"/>
<path d="M24.6 28.6 Q28 26.6 30.6 29 L30.8 34.9 L24.8 33.5 Z" fill="#3a2c22"/>
<path d="M27 30.6 L29.6 31.2 L29.6 33.6 L27 33 Z" fill="#e59a3a"/>
<path d="M14.5 21 L31 23.4 L31 25 L14.5 22.4 Z" fill="#5aa4e2" opacity=".7"/>
<path d="M11.2 4.40 L13.6 4.65 L13.6 6.85 L11.2 6.60 Z" fill="#dff6ec"/><path d="M11.2 7.95 L13.6 8.20 L13.6 10.40 L11.2 10.15 Z" fill="#dff6ec"/><path d="M11.2 11.50 L13.6 11.75 L13.6 13.95 L11.2 13.70 Z" fill="#dff6ec"/><path d="M11.2 15.05 L13.6 15.30 L13.6 17.50 L11.2 17.25 Z" fill="#dff6ec"/><path d="M11.2 18.60 L13.6 18.85 L13.6 21.05 L11.2 20.80 Z" fill="#dff6ec"/><path d="M11.2 22.15 L13.6 22.40 L13.6 24.60 L11.2 24.35 Z" fill="#dff6ec"/><path d="M11.2 25.70 L13.6 25.95 L13.6 28.15 L11.2 27.90 Z" fill="#dff6ec"/><path d="M11.2 29.25 L13.6 29.50 L13.6 31.70 L11.2 31.45 Z" fill="#dff6ec"/><path d="M32 6.60 L34.2 6.85 L34.2 9.05 L32 8.80 Z" fill="#dff6ec"/><path d="M32 10.30 L34.2 10.55 L34.2 12.75 L32 12.50 Z" fill="#dff6ec"/><path d="M32 14.00 L34.2 14.25 L34.2 16.45 L32 16.20 Z" fill="#dff6ec"/><path d="M32 17.70 L34.2 17.95 L34.2 20.15 L32 19.90 Z" fill="#dff6ec"/><path d="M32 21.40 L34.2 21.65 L34.2 23.85 L32 23.60 Z" fill="#dff6ec"/><path d="M32 25.10 L34.2 25.35 L34.2 27.55 L32 27.30 Z" fill="#dff6ec"/><path d="M32 28.80 L34.2 29.05 L34.2 31.25 L32 31.00 Z" fill="#dff6ec"/><path d="M32 32.50 L34.2 32.75 L34.2 34.95 L32 34.70 Z" fill="#dff6ec"/></svg><span class="t" style="left:326px;top:73px">Videos</span><span class="g" style="left:326px;top:89px">Library</span>
  </div>
  <div class="details"><svg style="left:9px;top:5px" width="44" height="44" viewBox="0 0 16 16"><g><path d="M.6 1 L5.6 1 L6.6 2.2 L15.2 2.2 L15.2 12.6 L.6 12.6 Z" fill="#f6dc7e" stroke="#dfbe58" stroke-width=".7"/>
<path d="M.6 3.8 L15.2 3.8 L15.2 12.6 L.6 12.6 Z" fill="#fbeeb2"/>
<path d="M2.4 14.6 L2.4 9 Q2.4 7.6 3.8 7.6 L12.2 7.6 Q13.6 7.6 13.6 9 L13.6 14.6 L10.4 14.6 L10.4 11 L5.6 11 L5.6 14.6 Z" fill="#86c2ec" stroke="#5a9bd0" stroke-width=".6"/>
<path d="M3.6 8.6 L12.4 8.6 L12.4 10.2 L3.6 10.2 Z" fill="#5aa85e" opacity=".75"/></g></svg><span>Select an item to see details</span></div>
  <div class="status"><span>4 items</span><svg style="left:726px;top:0px" width="56" height="20" viewBox="856 644 56 20">
<path d="M860.5 646 L860.5 663" stroke="#8c8c8c" stroke-width="1"/><path d="M861.5 646 L861.5 663" stroke="#fff" stroke-width="1"/>
<rect x="870.6" y="649" width="3" height="2.8" fill="#fff" stroke="#6a6a6a" stroke-width=".7"/><rect x="870.6" y="653" width="3" height="2.8" fill="#fff" stroke="#6a6a6a" stroke-width=".7"/><rect x="870.6" y="657" width="3" height="2.8" fill="#fff" stroke="#6a6a6a" stroke-width=".7"/>
<path d="M875.6 650.4 L879.4 650.4 M881 650.4 L885 650.4 M875.6 654.4 L879.4 654.4 M881 654.4 L885 654.4 M875.6 658.4 L879.4 658.4 M881 658.4 L885 658.4" stroke="#555" stroke-width="1.1"/>
<rect x="894" y="649.4" width="12.6" height="10.6" fill="#fff" stroke="#7a7f86" stroke-width=".8"/>
<rect x="895.4" y="650.8" width="9.8" height="7.8" fill="#2f8a96"/><path d="M895.4 650.8 L905.2 650.8 L905.2 653.4 Q900 651.4 895.4 654.4 Z" fill="#d6eef2"/><path d="M895.4 656 Q900 653.6 905.2 657 L905.2 658.6 L895.4 658.6 Z" fill="#1c3c48"/>
</svg></div>
 </div>
</div>

<div id="taskbar">
 <svg style="left:8px;top:1px" width="38" height="38" viewBox="8 729 38 38"><defs>
<radialGradient id="so1" cx=".5" cy=".68" r=".62"><stop offset="0" stop-color="#3fc0f0"/><stop offset=".5" stop-color="#1f80cc"/><stop offset="1" stop-color="#17457f"/></radialGradient>
<linearGradient id="so2" x1="0" y1="0" x2="0" y2="1"><stop offset="0" stop-color="#fff" stop-opacity=".85"/><stop offset=".6" stop-color="#dfeaf2" stop-opacity=".5"/><stop offset="1" stop-color="#fff" stop-opacity=".12"/></linearGradient>
<radialGradient id="so3" cx=".5" cy="1" r=".55"><stop offset="0" stop-color="#6aeaff" stop-opacity=".95"/><stop offset="1" stop-color="#5fe6ff" stop-opacity="0"/></radialGradient></defs>
<circle cx="27" cy="748" r="17.6" fill="url(#so1)" stroke="#123a66" stroke-width="1"/>
<circle cx="27" cy="748" r="17" fill="url(#so3)"/>
<path d="M10.3 745 A17 17 0 0 1 43.7 745 Q27 752 10.3 745 Z" fill="url(#so2)"/>
<path d="M18.4 738.4 Q22.2 735.8 26 738 L24.6 746.8 Q21 745 17 747.2 Z" fill="#f2582a"/>
<path d="M27.6 738.6 Q31.6 741 36 738.4 L34.4 747.4 Q30.2 749.8 26.2 747.4 Z" fill="#8cc63e"/>
<path d="M16.8 748.8 Q20.6 746.8 24.4 748.6 L23 757.2 Q19.4 755.4 15.6 757.4 Z" fill="#2a9be6"/>
<path d="M26 749.2 Q30 751.6 34.2 749.2 L32.8 757.8 Q28.8 760.2 24.6 757.8 Z" fill="#fcc92a"/>
</svg>
 <div class="abs" style="left:55px;top:0px;width:60px;height:39px;border:1px solid #16324e;border-radius:2px;background:linear-gradient(180deg,rgba(214,232,238,.95),rgba(196,222,228,.95) 50%,rgba(205,228,226,.95));box-shadow:inset 0 0 0 1px rgba(245,252,255,.9)"></div>
 <svg style="left:68px;top:5px" width="34" height="32" viewBox="68 733 34 32"><defs>
<linearGradient id="ex1" x1="0" y1="0" x2="0" y2="1"><stop offset="0" stop-color="#fdf0b4"/><stop offset="1" stop-color="#f3d678"/></linearGradient>
<linearGradient id="ex2" x1="0" y1="0" x2="0" y2="1"><stop offset="0" stop-color="#cdeafb"/><stop offset="1" stop-color="#8ec6ee"/></linearGradient></defs>
<path d="M71.6 735.4 L80.5 735.4 L82 737.4 L85.2 737.4 L85.2 741 L71.6 741 Z" fill="#f7e39a" stroke="#d6b85a" stroke-width=".6"/>
<rect x="72.4" y="736" width="3.6" height="2.6" fill="#35a03a"/>
<path d="M76.6 737.2 L84 737.2 L85.4 739 L90.6 739 L90.6 743 L76.6 743 Z" fill="#f8e6a2" stroke="#d6b85a" stroke-width=".6"/>
<rect x="77.4" y="737.8" width="3.6" height="2.6" fill="#d8442e"/>
<path d="M85 739 L93.6 739 L95 741 L100.6 741 L100.6 745 L85 745 Z" fill="#f9eaae" stroke="#d6b85a" stroke-width=".6"/>
<rect x="86.4" y="739.8" width="3.6" height="2.4" fill="#3a6fc0"/>
<path d="M69.6 741.4 L100.8 741.4 L100.8 760.6 L69.6 760.6 Z" fill="url(#ex1)" stroke="#d9b95c" stroke-width=".8"/>
<path d="M72.8 763.4 L72.8 753.6 Q72.8 751.2 75.4 751.2 L94.4 751.2 Q97 751.2 97 753.6 L97 763.4 L91 763.4 L91 757.6 L78.8 757.6 L78.8 763.4 Z" fill="url(#ex2)" stroke="#6ba6d6" stroke-width=".8" opacity=".95"/>
</svg><svg style="left:130px;top:3px" width="34" height="34" viewBox="130 731 34 34"><path d="M132.97 739.70 A16.2 16.2 0 0 1 161.03 739.70 L147.00 739.70 A8.10 8.10 0 0 0 139.99 751.85 Z" fill="#e94235" stroke="#e94235" stroke-width=".4"/><path d="M161.03 739.70 A16.2 16.2 0 0 1 147.00 764.00 L154.01 751.85 A8.10 8.10 0 0 0 147.00 739.70 Z" fill="#fabb2d" stroke="#fabb2d" stroke-width=".4"/><path d="M147.00 764.00 A16.2 16.2 0 0 1 132.97 739.70 L139.99 751.85 A8.10 8.10 0 0 0 154.01 751.85 Z" fill="#38a654" stroke="#38a654" stroke-width=".4"/><circle cx="147" cy="747.8" r="8.10" fill="#fff"/><circle cx="147" cy="747.8" r="6.32" fill="#4285f4"/></svg><svg style="left:192px;top:3px" width="34" height="34" viewBox="192 731 34 34">
<path d="M216.8 732.6 L224.4 735.6 L224.4 760.6 L216.8 763.4 L203.6 753 L196.8 758 L193.6 756.4 L193.6 739.4 L196.8 737.8 L203.6 743 Z" fill="#68217a" stroke="#fff" stroke-width="1.6" stroke-linejoin="round"/>
<path d="M216.4 742.4 L216.4 753.6 L209 748 Z" fill="#fbeefc"/>
<path d="M197 744.2 L197 751.8 L201.4 748 Z" fill="#fbeefc"/>
</svg>
 <svg style="left:907px;top:13px" width="18" height="15" viewBox="907 741 18 15">
<rect x="913.2" y="743.6" width="9" height="6.6" fill="#2a6cb0" stroke="#fff" stroke-width="1.3"/>
<path d="M917.7 750.6 L917.7 753.6 M913.6 754.2 L921.8 754.2" stroke="#fff" stroke-width="1.4" fill="none"/>
<rect x="908.8" y="742.6" width="4" height="5" rx="1.2" fill="#2a6cb0" stroke="#fff" stroke-width="1.2"/>
<path d="M910.8 747.8 L910.8 754.6" stroke="#fff" stroke-width="1.4"/>
<circle cx="910.8" cy="744.8" r=".8" fill="#fff"/>
</svg><svg style="left:931px;top:13px" width="17" height="15" viewBox="931 741 17 15">
<path d="M932.4 746 L934.8 746 L938.6 742.4 L938.6 755 L934.8 751.4 L932.4 751.4 Z" fill="#fff" stroke="#e8eef5" stroke-width=".5"/>
<path d="M940.4 746.4 Q942 748.7 940.4 751" stroke="#fff" stroke-width="1.1" fill="none"/>
<path d="M942.4 744.8 Q945 748.7 942.4 752.6" stroke="#fff" stroke-width="1.1" fill="none"/>
<path d="M944.4 743.2 Q948 748.7 944.4 754.2" stroke="#fff" stroke-width="1.1" fill="none" opacity=".85"/>
</svg>
 <div class="tray" style="left:955px;top:5px;width:60px">7:00 AM</div>
 <div class="tray" style="left:955px;top:22px;width:60px">2/16/2023</div>
 <div class="abs" style="left:1016px;top:1px;width:8px;height:39px;border-left:1px solid #16324e;background:linear-gradient(180deg,rgba(150,185,220,.6),rgba(90,140,195,.4));box-shadow:inset 1px 0 0 rgba(200,225,245,.6)"></div>
</div>
<div id="pop"><div id="hov"></div><svg style="left:17px;top:19px" width="18" height="16" viewBox="0 0 18 16">
<path d="M1 1.2 L7 1.2 L8.2 2.6 L16.6 2.6 L16.6 13.4 L1 13.4 Z" fill="#f7e08c" stroke="#e0bf58" stroke-width=".7"/>
<path d="M1 4.2 L16.6 4.2 L16.6 13.4 L1 13.4 Z" fill="#fbeeb4"/>
<path d="M3 15 L3 9.6 Q3 8.2 4.4 8.2 L13.4 8.2 Q14.8 8.2 14.8 9.6 L14.8 15 L11.6 15 L11.6 11.4 L6.2 11.4 L6.2 15 Z" fill="#8fc8ee" stroke="#5f9fd0" stroke-width=".6"/>
<path d="M4.4 9.2 L13.4 9.2 L13.4 10.8 L4.4 10.8Z" fill="#5fae5a" opacity=".7"/>
</svg><div id="ptitle">Libraries</div>
 <div id="thumb"><div class="win" style="">
 <div class="glass"></div>
 <div class="glasslow"></div>
 <div class="winedge"></div>
 <svg style="left:692px;top:-1px" width="101" height="22" viewBox="0 0 101 22"><defs>
<linearGradient id="cpb_t" x1="0" y1="0" x2="0" y2="1"><stop offset="0" stop-color="#b9c7da"/><stop offset=".45" stop-color="#9fb2ca"/><stop offset=".5" stop-color="#768eac"/><stop offset="1" stop-color="#93abc6"/></linearGradient>
<linearGradient id="cpr_t" x1="0" y1="0" x2="0" y2="1"><stop offset="0" stop-color="#ecbcb2"/><stop offset=".45" stop-color="#dc8170"/><stop offset=".5" stop-color="#c4432e"/><stop offset=".8" stop-color="#cf5c40"/><stop offset="1" stop-color="#e08e68"/></linearGradient></defs>
<path d="M1 0 L100 0 L100 16.4 Q100 20.4 96 20.4 L5 20.4 Q1 20.4 1 16.4 Z" fill="url(#cpb_t)" stroke="#2f4766" stroke-width="1"/>
<path d="M55 .5 L99.5 .5 L99.5 16.4 Q99.5 19.9 96 19.9 L55 19.9 Z" fill="url(#cpr_t)"/>
<path d="M2 1.5 L99 1.5 L99 16.2 Q99 19.4 96 19.4 L5 19.4 Q2 19.4 2 16.2 Z" fill="none" stroke="#fff" stroke-opacity=".45" stroke-width="1"/>
<path d="M28.5 .5 L28.5 20 M54.5 .5 L54.5 20" stroke="#2f4766" stroke-width="1"/>
<path d="M29.5 1 L29.5 19.5 M55.5 1 L55.5 19.5 M27.5 1 L27.5 19.5 M53.5 1 L53.5 19.5" stroke="#fff" stroke-opacity=".35" stroke-width="1"/>
<rect x="9.6" y="12" width="11" height="3.4" rx=".6" fill="#fff" stroke="#47607e" stroke-width=".9"/>
<path d="M36.6 6.7 L47 6.7 L47 15.4 L36.6 15.4 Z M39.6 9.6 L44 9.6 L44 12.6 L39.6 12.6 Z" fill="#fff" fill-rule="evenodd" stroke="#47607e" stroke-width=".9"/>
<path d="M72.6 6.6 L75.8 6.6 L77.8 9.2 L79.8 6.6 L83 6.6 L79.5 11 L83 15.4 L79.8 15.4 L77.8 12.8 L75.8 15.4 L72.6 15.4 L76.1 11 Z" fill="#fff" stroke="#6a2a20" stroke-width=".8" stroke-linejoin="round"/>
</svg>
 <svg style="left:8px;top:32px" width="64" height="30" viewBox="8 32 64 30"><defs>
<linearGradient id="nvb_t" x1="0" y1="0" x2="0" y2="1"><stop offset="0" stop-color="#9ab7d8" stop-opacity=".9"/><stop offset=".5" stop-color="#7fa3cb" stop-opacity=".9"/><stop offset="1" stop-color="#8fb0d4" stop-opacity=".9"/></linearGradient></defs>
<path d="M30 40 Q38.75 45 47.5 40 L47.5 54 Q38.75 49 30 54 Z" fill="#86a9d0" opacity=".75"/>
<circle cx="23.5" cy="47" r="12.2" fill="url(#nvb_t)" stroke="#6a8fbc" stroke-width="1.2"/>
<circle cx="54" cy="47" r="12.2" fill="url(#nvb_t)" stroke="#6a8fbc" stroke-width="1.2"/>
<circle cx="23.5" cy="47" r="10.8" fill="none" stroke="#c3d7ec" stroke-opacity=".6" stroke-width=".8"/>
<circle cx="54" cy="47" r="10.8" fill="none" stroke="#c3d7ec" stroke-opacity=".6" stroke-width=".8"/>
<path d="M16.6 47 L23 41.2 L23 45.2 L30.4 45.2 L30.4 48.8 L23 48.8 L23 52.8 Z" fill="#d3e2f2" stroke="#a9c2de" stroke-width=".5"/>
<path d="M60.9 47 L54.5 41.2 L54.5 45.2 L47.1 45.2 L47.1 48.8 L54.5 48.8 L54.5 52.8 Z" fill="#d3e2f2" stroke="#a9c2de" stroke-width=".5"/>
<path d="M75.5 47.6 L80.5 47.6" stroke="#b4cbe4" stroke-width="1.4" opacity=".7"/>
</svg>
 <div class="addr"><svg style="left:3px;top:3px" width="16" height="16" viewBox="0 0 16 16"><g><path d="M.6 1 L5.6 1 L6.6 2.2 L15.2 2.2 L15.2 12.6 L.6 12.6 Z" fill="#f6dc7e" stroke="#dfbe58" stroke-width=".7"/>
<path d="M.6 3.8 L15.2 3.8 L15.2 12.6 L.6 12.6 Z" fill="#fbeeb2"/>
<path d="M2.4 14.6 L2.4 9 Q2.4 7.6 3.8 7.6 L12.2 7.6 Q13.6 7.6 13.6 9 L13.6 14.6 L10.4 14.6 L10.4 11 L5.6 11 L5.6 14.6 Z" fill="#86c2ec" stroke="#5a9bd0" stroke-width=".6"/>
<path d="M3.6 8.6 L12.4 8.6 L12.4 10.2 L3.6 10.2 Z" fill="#5aa85e" opacity=".75"/></g></svg><svg style="left:0px;top:0px" width="487" height="21" viewBox="0 0 487 21">
<path d="M26.4 7.4 L30 10.8 L26.4 14.2 Z" fill="#5a5f66"/>
<path d="M93.4 7.4 L97 10.8 L93.4 14.2 Z" fill="#5a5f66"/>
<path d="M450.6 8.4 L453.8 11.8 L457 8.4" stroke="#5a6470" stroke-width="1.5" fill="none"/>
<path d="M462.5 0 L462.5 21" stroke="#3a5a84" stroke-opacity=".8" stroke-width="1"/>
<path d="M478.6 7.2 A4.4 4.4 0 1 1 473.4 6.6" stroke="#707a88" stroke-width="1.3" fill="none"/>
<path d="M476.4 4 L480.6 6.4 L476.6 9 Z" fill="#707a88"/>
</svg><span>Libraries</span></div>
 <div class="search"><span>Search Libraries</span><svg style="left:183px;top:4px" width="14" height="14" viewBox="0 0 14 14"><circle cx="8.6" cy="5" r="3.5" fill="none" stroke="#6a7482" stroke-width="1.7"/><path d="M6 7.8 L1.6 12.2" stroke="#6a7482" stroke-width="2.2" stroke-linecap="round"/></svg></div>
 <div class="client">
  <div class="menubar"><span style="left:10px">File</span><span style="left:44px">Edit</span><span style="left:80px">View</span><span style="left:121px">Tools</span><span style="left:166px">Help</span></div>
  <div class="cmdbar"><span style="left:18px">Organize</span><svg style="left:70px;top:13px" width="9" height="6" viewBox="0 0 9 6"><path d="M.8 .8 L8.2 .8 L4.5 5 Z" fill="#1e2a3a"/></svg><span style="left:109px">New library</span><svg style="left:660px;top:5px" width="112" height="20" viewBox="790 168 112 20"><defs><linearGradient id="hlp_t" x1="0" y1="0" x2="0" y2="1"><stop offset="0" stop-color="#6a8fd8"/><stop offset="1" stop-color="#1e3ea4"/></linearGradient></defs>
<rect x="792.6" y="171" width="6.4" height="6" fill="#f4f6f8" stroke="#7d8894" stroke-width=".8"/><rect x="792.6" y="178.6" width="6.4" height="6" fill="#f4f6f8" stroke="#7d8894" stroke-width=".8"/>
<path d="M794 175 L797.6 175 M794 182.6 L797.6 182.6" stroke="#3a4654" stroke-width="1.4"/>
<path d="M801 172 L808 172 M801 174.6 L805 174.6 M801 179.6 L808 179.6 M801 182.2 L805 182.2" stroke="#5e6a78" stroke-width="1"/>
<path d="M817.6 176.4 L825.2 176.4 L821.4 180.4 Z" fill="#1e2a3a"/>
<rect x="847.2" y="170.8" width="15.4" height="13.6" fill="#fdfeff" stroke="#7d8ea6" stroke-width=".9"/>
<path d="M847.2 173.6 L862.6 173.6 M852 173.6 L852 184.4 M857.4 173.6 L857.4 184.4" stroke="#7d8ea6" stroke-width=".8"/>
<rect x="857.8" y="174" width="4.4" height="10" fill="#86bdec"/>
<circle cx="890.8" cy="178.2" r="6.8" fill="url(#hlp_t)" stroke="#2a4aa0" stroke-width=".9"/>
<circle cx="890.8" cy="178.2" r="5.6" fill="none" stroke="#d9e6fa" stroke-opacity=".8" stroke-width=".7"/>
<path d="M888.6 176.4 Q888.6 174.2 890.9 174.2 Q893.2 174.2 893.2 176.2 Q893.2 177.4 891.8 178.2 Q891 178.8 891 179.8" stroke="#fff" stroke-width="1.5" fill="none"/><circle cx="891" cy="181.8" r=".9" fill="#fff"/>
</svg></div>
  <div class="nav">
   <div class="sel"></div>
   <svg style="left:20px;top:10px" width="16" height="16" viewBox="0 0 16 16"><defs><linearGradient id="stg_t" x1="0" y1="0" x2="0" y2="1"><stop offset="0" stop-color="#fff0a0"/><stop offset="1" stop-color="#f6b93a"/></linearGradient></defs>
<path d="M8 .9 L10.1 5.6 L15.3 6.2 L11.5 9.7 L12.5 14.9 L8 12.3 L3.5 14.9 L4.5 9.7 L.7 6.2 L5.9 5.6 Z" fill="url(#stg_t)" stroke="#e7923c" stroke-width="1" stroke-linejoin="round"/></svg><span style="left:41px;top:13px">Favorites</span>
   <svg style="left:30px;top:35px" width="16" height="13" viewBox="0 0 16 13"><defs><linearGradient id="dkg_t" x1="0" y1="0" x2="1" y2="1"><stop offset="0" stop-color="#2a56b8"/><stop offset=".6" stop-color="#4c8ce0"/><stop offset="1" stop-color="#3a6cc8"/></linearGradient></defs>
<rect x=".4" y=".4" width="15.2" height="12" fill="url(#dkg_t)" stroke="#5a7fb6" stroke-width=".6"/><rect x=".4" y="9.8" width="15.2" height="2.6" fill="#3a4660"/></svg><span style="left:51px;top:34px">Desktop</span>
   <svg style="left:30px;top:53px" width="17" height="17" viewBox="0 0 17 17"><defs><linearGradient id="dlg_t" x1="0" y1="0" x2="1" y2="0"><stop offset="0" stop-color="#f9eeb0"/><stop offset="1" stop-color="#e8cb66"/></linearGradient></defs>
<path d="M.8 .6 L6 .6 L6 15.2 L.8 14 Z" fill="#efd97e" stroke="#d6b85a" stroke-width=".5"/>
<path d="M3.4 1.6 L11.6 .6 L12.6 1.6 L12.6 14.2 L3.4 15.4 Z" fill="url(#dlg_t)" stroke="#d6b85a" stroke-width=".5"/>
<path d="M9.8 6.2 L13.8 6.2 L13.8 10.6 L16.4 10.6 L11.8 16 L7.2 10.6 L9.8 10.6 Z" fill="#2f9be0" stroke="#1c6fb8" stroke-width=".7" stroke-linejoin="round"/></svg><span style="left:51px;top:55px">Downloads</span>
   <svg style="left:30px;top:75px" width="16" height="15" viewBox="0 0 16 15">
<rect x="3.6" y="1.4" width="11.6" height="10" fill="#f2f3f5" stroke="#8c9096" stroke-width=".8"/>
<path d="M6 4 L13.6 4 M8.6 6.2 L13.6 6.2 M6 8.4 L13.6 8.4" stroke="#9aa0a8" stroke-width=".9"/>
<rect x="2.4" y="11.4" width="13.2" height="3" fill="#a9adb3" stroke="#80858c" stroke-width=".6"/>
<circle cx="3.6" cy="3.6" r="3" fill="#f7f8fa" stroke="#8c9096" stroke-width=".8"/><path d="M3.6 1.8 L3.6 3.8 L5 3.8" stroke="#70757c" stroke-width=".7" fill="none"/></svg><span style="left:51px;top:76px;letter-spacing:-.3px">Recent places</span>
   <svg style="left:20px;top:117px" width="16" height="16" viewBox="0 0 16 16"><g><path d="M.6 1 L5.6 1 L6.6 2.2 L15.2 2.2 L15.2 12.6 L.6 12.6 Z" fill="#f6dc7e" stroke="#dfbe58" stroke-width=".7"/>
<path d="M.6 3.8 L15.2 3.8 L15.2 12.6 L.6 12.6 Z" fill="#fbeeb2"/>
<path d="M2.4 14.6 L2.4 9 Q2.4 7.6 3.8 7.6 L12.2 7.6 Q13.6 7.6 13.6 9 L13.6 14.6 L10.4 14.6 L10.4 11 L5.6 11 L5.6 14.6 Z" fill="#86c2ec" stroke="#5a9bd0" stroke-width=".6"/>
<path d="M3.6 8.6 L12.4 8.6 L12.4 10.2 L3.6 10.2 Z" fill="#5aa85e" opacity=".75"/></g></svg><span style="left:41px;top:118px">Libraries</span>
   <svg style="left:19px;top:158px" width="17" height="16" viewBox="0 0 17 16">
<rect x=".8" y="5.4" width="2.6" height="8.6" fill="#d6d8de" stroke="#9a9ea8" stroke-width=".5"/>
<path d="M4.6 1 L16.2 .4 L16.2 10.4 L4.6 10 Z" fill="#e4e6ec" stroke="#a9adb8" stroke-width=".6"/>
<path d="M5.8 2 L15 1.6 L15 9.2 L5.8 8.8 Z" fill="#2434c0"/>
<path d="M10.6 1.8 L15 1.6 L15 9.2 L12 9 Z" fill="#8e9af0" opacity=".8"/>
<path d="M9 10.4 L12 10.4 L12.4 12.6 L8.6 12.6 Z" fill="#c9ccd4"/><ellipse cx="10.4" cy="13.2" rx="4" ry="1.2" fill="#d9dbe2" stroke="#a9adb8" stroke-width=".4"/></svg><span style="left:41px;top:160px">My Computer</span>
   <svg style="left:20px;top:199px" width="17" height="17" viewBox="0 0 17 17"><defs><radialGradient id="ngl_t" cx=".35" cy=".35" r=".8"><stop offset="0" stop-color="#9fe0f0"/><stop offset=".6" stop-color="#2f9a8c"/><stop offset="1" stop-color="#1a6a8c"/></radialGradient></defs>
<circle cx="5.6" cy="5.8" r="5.2" fill="url(#ngl_t)" stroke="#2a7a94" stroke-width=".5"/>
<path d="M2.2 4 Q4.6 2.4 6.4 3.6 Q5.2 6 6.6 7.6 Q4 8.8 2.2 7 Z" fill="#3aa85a" opacity=".85"/>
<path d="M6.6 4.6 L16 4.2 L16 12.4 L6.6 12 Z" fill="#dfe2ea" stroke="#9aa0ae" stroke-width=".6"/>
<path d="M7.6 5.4 L15 5.1 L15 11.4 L7.6 11.1 Z" fill="#1c2cc0"/>
<path d="M11.6 5.3 L15 5.1 L15 11.4 L12.8 11.3 Z" fill="#7f8cf0" opacity=".8"/>
<path d="M10.2 12.2 L12.6 12.2 L12.8 14.6 L10 14.6 Z" fill="#b9bcc6"/><path d="M8 15.4 L14.6 15.4" stroke="#9aa0ae" stroke-width="1.2"/></svg><span style="left:41px;top:202px">Network</span>
  </div>
  <div class="content">
   <svg style="left:19px;top:6px" width="48" height="48" viewBox="0 0 48 48"><defs><linearGradient id="dpd_t" x1="0" y1="0" x2="1" y2="1"><stop offset="0" stop-color="#d8eef8"/><stop offset=".5" stop-color="#a9d8ee"/><stop offset="1" stop-color="#8ccbe8"/></linearGradient></defs>
<path d="M0.6 36 L0.6 38.4 L27.6 48 L46.4 37.2 L46.4 34.8 Z" fill="#6cb4d9"/>
<path d="M0.6 36 L19.4 25.4 L46.4 34.8 L27.8 45.6 Z" fill="url(#dpd_t)" stroke="#8ac6e4" stroke-width=".6"/>
<path d="M3 36 L19.6 26.6 L32 31 L15 40.2 Z" fill="#e6f5fb" opacity=".55"/>
<defs><linearGradient id="dpg_t" x1="0" y1="0" x2="1" y2="1"><stop offset="0" stop-color="#fbfaff"/><stop offset="1" stop-color="#e4e1f2"/></linearGradient></defs>
<path d="M12 2.4 L30 4.8 L35.4 12 L35.4 38.2 L12 32 Z" fill="url(#dpg_t)" stroke="#c9aec2" stroke-width=".8" stroke-linejoin="round"/>
<path d="M30 4.8 L30 11.2 L35.4 12 Z" fill="#f4f2fa" stroke="#c9aec2" stroke-width=".6"/>
<path d="M14.6 6.2 L29 8.8" stroke="#79b896" stroke-width="1.6"/>
<path d="M15.4 11.4 L23.6 13 M15.4 14.6 L23.6 16.2 M15.4 17.8 L23.6 19.4 M15.4 21 L33 24.8 M15.4 24.2 L33 28 M15.4 27.4 L33 31.2" stroke="#d3b9cc" stroke-width=".9"/>
<path d="M25.2 12.6 L33.2 14.2 L33.2 22 L25.2 20.2 Z" fill="#2f5f8a"/>
<path d="M25.2 16.4 L28 15 L33.2 19.4 L33.2 22 L25.2 20.2 Z" fill="#17395c"/>
<path d="M25.2 12.6 L33.2 14.2 L33.2 16 L25.2 14.4 Z" fill="#9cc8e6"/></svg><span class="t" style="left:72px;top:17px">Documents</span><span class="g" style="left:72px;top:33px">Library</span>
   <svg style="left:273px;top:6px" width="48" height="48" viewBox="0 0 48 48"><defs><linearGradient id="mpd_t" x1="0" y1="0" x2="1" y2="1"><stop offset="0" stop-color="#d8eef8"/><stop offset=".5" stop-color="#a9d8ee"/><stop offset="1" stop-color="#8ccbe8"/></linearGradient></defs>
<path d="M0.6 36 L0.6 38.4 L27.6 48 L46.4 37.2 L46.4 34.8 Z" fill="#6cb4d9"/>
<path d="M0.6 36 L19.4 25.4 L46.4 34.8 L27.8 45.6 Z" fill="url(#mpd_t)" stroke="#8ac6e4" stroke-width=".6"/>
<path d="M3 36 L19.6 26.6 L32 31 L15 40.2 Z" fill="#e6f5fb" opacity=".55"/>
<defs><radialGradient id="mnh_t" cx=".38" cy=".3" r=".75"><stop offset="0" stop-color="#7cc4f2"/><stop offset=".5" stop-color="#2f95dc"/><stop offset="1" stop-color="#1b6fb8"/></radialGradient>
<linearGradient id="mst_t" x1="0" y1="0" x2="1" y2="0"><stop offset="0" stop-color="#3f96d4"/><stop offset="1" stop-color="#8cc6ee"/></linearGradient></defs>
<path d="M27.2 2 Q27.6 1.6 28.4 2.2 Q38.4 9.6 37.8 18 Q37.4 23.6 33.6 27.6 Q32.6 28.2 32.6 27 Q35.6 21.6 34.4 16.6 Q33.4 12.2 30.2 9.6 L30.2 30.6 L27.2 30.6 Z" fill="url(#mst_t)" stroke="#2f7ebc" stroke-width=".8" stroke-linejoin="round"/>
<ellipse cx="22.4" cy="29.2" rx="8.6" ry="7" fill="url(#mnh_t)" stroke="#2a78b8" stroke-width=".7" transform="rotate(-18 22.4 29.2)"/>
<path d="M15.4 28.8 Q15.6 23.6 21.6 22.6 Q17.6 25.4 17.6 31.6 Q15.6 31 15.4 28.8Z" fill="#b8def6" opacity=".8"/></svg><span class="t" style="left:326px;top:17px">Music</span><span class="g" style="left:326px;top:33px">Library</span>
   <svg style="left:19px;top:62px" width="48" height="48" viewBox="0 0 48 48"><defs><linearGradient id="ppd_t" x1="0" y1="0" x2="1" y2="1"><stop offset="0" stop-color="#d8eef8"/><stop offset=".5" stop-color="#a9d8ee"/><stop offset="1" stop-color="#8ccbe8"/></linearGradient></defs>
<path d="M0.6 36 L0.6 38.4 L27.6 48 L46.4 37.2 L46.4 34.8 Z" fill="#6cb4d9"/>
<path d="M0.6 36 L19.4 25.4 L46.4 34.8 L27.8 45.6 Z" fill="url(#ppd_t)" stroke="#8ac6e4" stroke-width=".6"/>
<path d="M3 36 L19.6 26.6 L32 31 L15 40.2 Z" fill="#e6f5fb" opacity=".55"/>
<defs><linearGradient id="psk_t" x1="0" y1="0" x2="0" y2="1"><stop offset="0" stop-color="#5d9fd8"/><stop offset=".6" stop-color="#b9dcee"/><stop offset="1" stop-color="#8fb8c9"/></linearGradient></defs>
<path d="M27 38.6 L40 36 L44 34.8 L36 32 Z" fill="#e9b9d6" opacity=".55"/>
<path d="M9 10.2 L34.6 14 L34.6 36.6 L9 31.6 Z" fill="#f8f9fc" stroke="#b7c1d0" stroke-width=".8" stroke-linejoin="round"/>
<path d="M12 13.4 L31.6 16.4 L31.6 33.4 L12 29.6 Z" fill="url(#psk_t)"/>
<path d="M12 20.4 Q18 21 23 25.6 Q27 28.6 31.6 29.6 L31.6 33.4 L12 29.6 Z" fill="#3f7358"/>
<path d="M12 24.8 Q20 26 31.6 31.6 L31.6 33.4 L12 29.6 Z" fill="#6fa0a8" opacity=".8"/></svg><span class="t" style="left:72px;top:73px">Pictures</span><span class="g" style="left:72px;top:89px">Library</span>
   <svg style="left:273px;top:62px" width="48" height="48" viewBox="0 0 48 48"><defs><linearGradient id="vpd_t" x1="0" y1="0" x2="1" y2="1"><stop offset="0" stop-color="#d8eef8"/><stop offset=".5" stop-color="#a9d8ee"/><stop offset="1" stop-color="#8ccbe8"/></linearGradient></defs>
<path d="M0.6 36 L0.6 38.4 L27.6 48 L46.4 37.2 L46.4 34.8 Z" fill="#6cb4d9"/>
<path d="M0.6 36 L19.4 25.4 L46.4 34.8 L27.8 45.6 Z" fill="url(#vpd_t)" stroke="#8ac6e4" stroke-width=".6"/>
<path d="M3 36 L19.6 26.6 L32 31 L15 40.2 Z" fill="#e6f5fb" opacity=".55"/>
<path d="M10.3 2.3 L35 4.4 L35 37.75 L10.3 32.75 Z" fill="#2c3a40" stroke="#1e2a30" stroke-width=".6" stroke-linejoin="round"/>
<path d="M14.5 4 L31 5.5 L31 35 L14.5 31 Z" fill="#2f8ad8"/>
<path d="M14.5 14 Q18 12 21 14.6 Q22 18.6 18 19.4 L14.5 18.4 Z" fill="#c93a3a"/>
<path d="M23.6 9.4 Q28 7.4 30.6 10.6 Q31 17 27 19.6 Q23 17.6 23.6 9.4 Z" fill="#4a7a3a"/>
<path d="M26 10.6 Q29 10 29.4 13.6 Q28.6 17.4 26.6 17.4 Z" fill="#d8702a"/>
<path d="M22 15 Q25 22 29 27" stroke="#26323a" stroke-width="1.2" fill="none"/>
<path d="M24.6 28.6 Q28 26.6 30.6 29 L30.8 34.9 L24.8 33.5 Z" fill="#3a2c22"/>
<path d="M27 30.6 L29.6 31.2 L29.6 33.6 L27 33 Z" fill="#e59a3a"/>
<path d="M14.5 21 L31 23.4 L31 25 L14.5 22.4 Z" fill="#5aa4e2" opacity=".7"/>
<path d="M11.2 4.40 L13.6 4.65 L13.6 6.85 L11.2 6.60 Z" fill="#dff6ec"/><path d="M11.2 7.95 L13.6 8.20 L13.6 10.40 L11.2 10.15 Z" fill="#dff6ec"/><path d="M11.2 11.50 L13.6 11.75 L13.6 13.95 L11.2 13.70 Z" fill="#dff6ec"/><path d="M11.2 15.05 L13.6 15.30 L13.6 17.50 L11.2 17.25 Z" fill="#dff6ec"/><path d="M11.2 18.60 L13.6 18.85 L13.6 21.05 L11.2 20.80 Z" fill="#dff6ec"/><path d="M11.2 22.15 L13.6 22.40 L13.6 24.60 L11.2 24.35 Z" fill="#dff6ec"/><path d="M11.2 25.70 L13.6 25.95 L13.6 28.15 L11.2 27.90 Z" fill="#dff6ec"/><path d="M11.2 29.25 L13.6 29.50 L13.6 31.70 L11.2 31.45 Z" fill="#dff6ec"/><path d="M32 6.60 L34.2 6.85 L34.2 9.05 L32 8.80 Z" fill="#dff6ec"/><path d="M32 10.30 L34.2 10.55 L34.2 12.75 L32 12.50 Z" fill="#dff6ec"/><path d="M32 14.00 L34.2 14.25 L34.2 16.45 L32 16.20 Z" fill="#dff6ec"/><path d="M32 17.70 L34.2 17.95 L34.2 20.15 L32 19.90 Z" fill="#dff6ec"/><path d="M32 21.40 L34.2 21.65 L34.2 23.85 L32 23.60 Z" fill="#dff6ec"/><path d="M32 25.10 L34.2 25.35 L34.2 27.55 L32 27.30 Z" fill="#dff6ec"/><path d="M32 28.80 L34.2 29.05 L34.2 31.25 L32 31.00 Z" fill="#dff6ec"/><path d="M32 32.50 L34.2 32.75 L34.2 34.95 L32 34.70 Z" fill="#dff6ec"/></svg><span class="t" style="left:326px;top:73px">Videos</span><span class="g" style="left:326px;top:89px">Library</span>
  </div>
  <div class="details"><svg style="left:9px;top:5px" width="44" height="44" viewBox="0 0 16 16"><g><path d="M.6 1 L5.6 1 L6.6 2.2 L15.2 2.2 L15.2 12.6 L.6 12.6 Z" fill="#f6dc7e" stroke="#dfbe58" stroke-width=".7"/>
<path d="M.6 3.8 L15.2 3.8 L15.2 12.6 L.6 12.6 Z" fill="#fbeeb2"/>
<path d="M2.4 14.6 L2.4 9 Q2.4 7.6 3.8 7.6 L12.2 7.6 Q13.6 7.6 13.6 9 L13.6 14.6 L10.4 14.6 L10.4 11 L5.6 11 L5.6 14.6 Z" fill="#86c2ec" stroke="#5a9bd0" stroke-width=".6"/>
<path d="M3.6 8.6 L12.4 8.6 L12.4 10.2 L3.6 10.2 Z" fill="#5aa85e" opacity=".75"/></g></svg><span>Select an item to see details</span></div>
  <div class="status"><span>4 items</span><svg style="left:726px;top:0px" width="56" height="20" viewBox="856 644 56 20">
<path d="M860.5 646 L860.5 663" stroke="#8c8c8c" stroke-width="1"/><path d="M861.5 646 L861.5 663" stroke="#fff" stroke-width="1"/>
<rect x="870.6" y="649" width="3" height="2.8" fill="#fff" stroke="#6a6a6a" stroke-width=".7"/><rect x="870.6" y="653" width="3" height="2.8" fill="#fff" stroke="#6a6a6a" stroke-width=".7"/><rect x="870.6" y="657" width="3" height="2.8" fill="#fff" stroke="#6a6a6a" stroke-width=".7"/>
<path d="M875.6 650.4 L879.4 650.4 M881 650.4 L885 650.4 M875.6 654.4 L879.4 654.4 M881 654.4 L885 654.4 M875.6 658.4 L879.4 658.4 M881 658.4 L885 658.4" stroke="#555" stroke-width="1.1"/>
<rect x="894" y="649.4" width="12.6" height="10.6" fill="#fff" stroke="#7a7f86" stroke-width=".8"/>
<rect x="895.4" y="650.8" width="9.8" height="7.8" fill="#2f8a96"/><path d="M895.4 650.8 L905.2 650.8 L905.2 653.4 Q900 651.4 895.4 654.4 Z" fill="#d6eef2"/><path d="M895.4 656 Q900 653.6 905.2 657 L905.2 658.6 L895.4 658.6 Z" fill="#1c3c48"/>
</svg></div>
 </div>
</div>
</div>
</div>

</body></html>
